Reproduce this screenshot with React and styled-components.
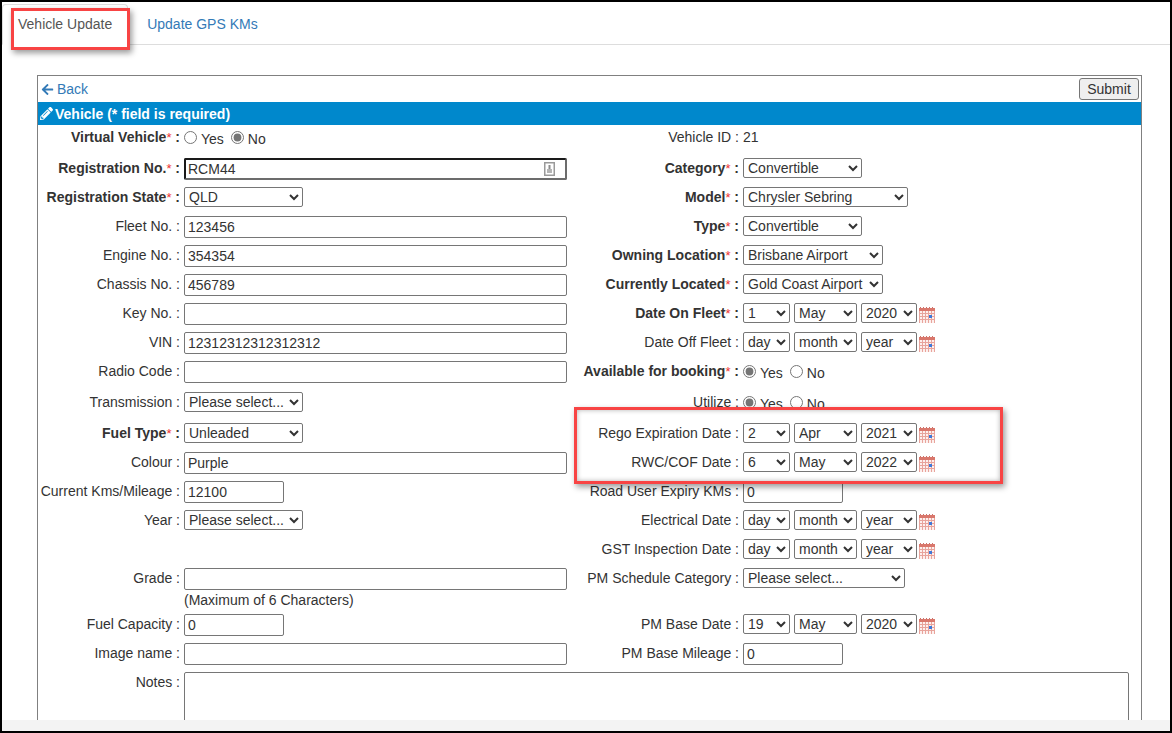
import React from 'react';
import styled, { createGlobalStyle } from 'styled-components';
import { FaArrowLeft, FaPencilAlt } from 'react-icons/fa';

const GlobalStyle = createGlobalStyle`
  html, body {
    margin: 0;
    padding: 0;
    overflow: hidden;
    background: #fff;
  }
  * {
    box-sizing: border-box;
  }
`;

const Frame = styled.div`
  position: relative;
  width: 1172px;
  height: 733px;
  border: 2px solid #000;
  background: #fff;
  display: flex;
  flex-direction: column;
  overflow: hidden;
  font-family: "Liberation Sans", Arial, sans-serif;
  font-size: 14px;
  line-height: 20px;
  color: #333;
`;

const Nav = styled.div`
  display: flex;
  flex: none;
  height: 43px;
  padding-top: 2px;
  border-bottom: 1px solid #ddd;
`;

const TabItem = styled.a`
  height: ${p => (p.$active ? '41px' : '40px')};
  padding: 9px 15px;
  margin-right: 3px;
  color: ${p => (p.$active ? '#555' : '#337ab7')};
  background: ${p => (p.$active ? '#fff' : 'transparent')};
  border: 1px solid ${p => (p.$active ? '#ddd' : 'transparent')};
  border-bottom-color: transparent;
  border-radius: 4px 4px 0 0;
  text-decoration: none;
`;

const Content = styled.div`
  flex: 1;
  min-height: 0;
  overflow: hidden;
  padding: 30px 0 0 35px;
`;

const Panel = styled.div`
  width: 1105px;
  border: 1px solid #808080;
  border-bottom: none;
`;

const PanelTop = styled.div`
  display: flex;
  align-items: center;
  justify-content: space-between;
  height: 26px;
  padding: 0 2px 0 3px;
`;

const BackLink = styled.a`
  display: flex;
  align-items: center;
  gap: 3px;
  color: #337ab7;
  text-decoration: none;
  svg {
    width: 13px;
    height: 13px;
  }
`;

const SubmitButton = styled.button`
  width: 60px;
  height: 22px;
  padding: 0;
  font: inherit;
  color: #333;
  background: #efefef;
  border: 1px solid #767676;
  border-radius: 3px;
`;

const TitleBar = styled.div`
  display: flex;
  align-items: center;
  gap: 2px;
  height: 23px;
  padding: 0 0 0 2px;
  background: #0088cc;
  color: #fff;
  font-weight: bold;
  svg {
    width: 13px;
    height: 13px;
  }
`;

const Form = styled.div`
  padding-top: 2px;
`;

const Row = styled.div`
  display: grid;
  grid-template-columns: 142px 383px 168px 1fr;
  column-gap: 4px;
  align-items: start;
  height: ${p => p.$h}px;
`;

const Label = styled.div`
  text-align: right;
  white-space: nowrap;
  font-weight: ${p => (p.$bold ? 'bold' : 'normal')};
`;

const Star = styled.span`
  color: #e33;
  font-weight: normal;
  font-size: 13px;
`;

const Control = styled.div`
  display: flex;
  align-items: center;
  min-height: 20px;
`;

const WideControl = styled(Control)`
  grid-column: 2 / -1;
`;

const TextInput = styled.input`
  width: ${p => p.$w || '100%'};
  height: 22px;
  padding: 1px 3px;
  font: inherit;
  color: #333;
  background: #fff;
  border: 1px solid #767676;
  border-radius: 2px;
  outline: none;
`;

const FocusWrap = styled.div`
  position: relative;
  width: 100%;
`;

const FocusInput = styled(TextInput)`
  padding: 1px 2px;
  border-width: 2px;
  border-color: #1a1a1a #6c6c6c #6c6c6c #1a1a1a;
`;

const ManagerIcon = styled.svg`
  position: absolute;
  top: 4px;
  right: 12px;
  width: 11px;
  height: 14px;
`;

const Select = styled.select`
  width: ${p => p.$w}px;
  height: 20px;
  font-family: inherit;
  font-size: 14px;
  color: #333;
  background: #fff;
  border: 1px solid #767676;
  border-radius: 2px;
`;

const DateGroup = styled.div`
  display: flex;
  align-items: center;
  gap: 4px;
`;

const CalendarSvg = styled.svg`
  width: 16px;
  height: 16px;
  margin: 3px 0 0 -2px;
`;

const RadioGroup = styled.div`
  display: flex;
  align-items: center;
  gap: 7px;
`;

const RadioLabel = styled.label`
  display: flex;
  align-items: center;
  gap: 4px;
  height: 20px;
`;

const RadioText = styled.span`
  padding-top: 3px;
`;

const Radio = styled.input`
  width: 13px;
  height: 13px;
  margin: 0;
  accent-color: #757575;
`;

const Plain = styled.span`
  white-space: nowrap;
`;

const Notes = styled.textarea`
  width: 945px;
  height: 120px;
  padding: 2px 3px;
  font: inherit;
  border: 1px solid #767676;
  border-radius: 2px;
  resize: none;
`;

const ScrollTrack = styled.div`
  flex: none;
  height: 11px;
  background: #f3f3f3;
`;

const TabMark = styled.div`
  position: absolute;
  left: 9px;
  top: 6px;
  width: 119px;
  height: 42px;
  border: 3px solid #f84444;
  box-shadow: 2px 3px 6px rgba(0, 0, 0, 0.4);
  pointer-events: none;
`;

const Callout = styled.div`
  position: absolute;
  left: 572px;
  top: 405px;
  width: 429px;
  height: 77px;
  padding-top: 13px;
  background: #fff;
  border: 3px solid #f84444;
  box-shadow: 2px 3px 6px rgba(0, 0, 0, 0.4), inset 0 0 5px rgba(0, 0, 0, 0.3);
`;

const CalloutRow = styled.div`
  display: grid;
  grid-template-columns: 162px 1fr;
  column-gap: 4px;
  align-items: start;
  height: 29px;
`;

const Field = ({ label, bold, req, children }) => (
  <>
    <Label $bold={bold}>
      {label}
      {req && <Star>*</Star>} :
    </Label>
    <Control>{children}</Control>
  </>
);

const Blank = () => (
  <>
    <div />
    <div />
  </>
);

const Sel = ({ w, value }) => (
  <Select $w={w} defaultValue={value}>
    <option>{value}</option>
  </Select>
);

const CalendarIcon = () => (
  <CalendarSvg viewBox="0 0 16 16">
    <rect x="0" y="1" width="16" height="15" fill="#fdf0ee" />
    <rect x="0" y="1" width="16" height="3" fill="#d9776c" />
    <path d="M1 .5h1M4 .5h1M7 .5h1M10 .5h1M13 .5h1" stroke="#c9726a" fill="none" />
    <path
      d="M0 6.5h16M0 9.5h16M0 12.5h16M.5 4v12M3.5 4v12M6.5 4v12M9.5 4v12M12.5 4v12M15.5 4v12"
      stroke="#e8a49c"
      fill="none"
    />
    <rect x="10" y="8" width="3" height="3" fill="#3f78d8" />
  </CalendarSvg>
);

const DateFields = ({ d, m, y }) => (
  <DateGroup>
    <Sel w={47} value={d} />
    <Sel w={63} value={m} />
    <Sel w={56} value={y} />
    <CalendarIcon />
  </DateGroup>
);

const YesNo = ({ name, yes }) => (
  <RadioGroup>
    <RadioLabel>
      <Radio type="radio" name={name} defaultChecked={yes} />
      <RadioText>Yes</RadioText>
    </RadioLabel>
    <RadioLabel>
      <Radio type="radio" name={name} defaultChecked={!yes} />
      <RadioText>No</RadioText>
    </RadioLabel>
  </RadioGroup>
);

export default function App() {
  return (
    <Frame>
      <GlobalStyle />
      <Nav>
        <TabItem $active>Vehicle Update</TabItem>
        <TabItem>Update GPS KMs</TabItem>
      </Nav>

      <Content>
        <Panel>
          <PanelTop>
            <BackLink>
              <FaArrowLeft />
              Back
            </BackLink>
            <SubmitButton>Submit</SubmitButton>
          </PanelTop>
          <TitleBar>
            <FaPencilAlt />
            Vehicle (* field is required)
          </TitleBar>

          <Form>
            <Row $h={31}>
              <Field label="Virtual Vehicle" bold req>
                <YesNo name="virtual" yes={false} />
              </Field>
              <Field label="Vehicle ID">
                <Plain>21</Plain>
              </Field>
            </Row>
            <Row $h={29}>
              <Field label="Registration No." bold req>
                <FocusWrap>
                  <FocusInput defaultValue="RCM44" />
                  <ManagerIcon viewBox="0 0 11 14">
                    <rect x="0.75" y="0.75" width="9.5" height="12.5" fill="#fff" stroke="#9a9a9a" strokeWidth="1.5" />
                    <rect x="4.5" y="3" width="2" height="4" fill="#8c8c8c" />
                    <rect x="3" y="7" width="5" height="4" fill="#b5b5b5" />
                  </ManagerIcon>
                </FocusWrap>
              </Field>
              <Field label="Category" bold req>
                <Sel w={119} value="Convertible" />
              </Field>
            </Row>
            <Row $h={29}>
              <Field label="Registration State" bold req>
                <Sel w={119} value="QLD" />
              </Field>
              <Field label="Model" bold req>
                <Sel w={165} value="Chrysler Sebring" />
              </Field>
            </Row>
            <Row $h={29}>
              <Field label="Fleet No.">
                <TextInput defaultValue="123456" />
              </Field>
              <Field label="Type" bold req>
                <Sel w={119} value="Convertible" />
              </Field>
            </Row>
            <Row $h={29}>
              <Field label="Engine No.">
                <TextInput defaultValue="354354" />
              </Field>
              <Field label="Owning Location" bold req>
                <Sel w={140} value="Brisbane Airport" />
              </Field>
            </Row>
            <Row $h={29}>
              <Field label="Chassis No.">
                <TextInput defaultValue="456789" />
              </Field>
              <Field label="Currently Located" bold req>
                <Sel w={140} value="Gold Coast Airport" />
              </Field>
            </Row>
            <Row $h={29}>
              <Field label="Key No.">
                <TextInput />
              </Field>
              <Field label="Date On Fleet" bold req>
                <DateFields d="1" m="May" y="2020" />
              </Field>
            </Row>
            <Row $h={29}>
              <Field label="VIN">
                <TextInput defaultValue="12312312312312312" />
              </Field>
              <Field label="Date Off Fleet">
                <DateFields d="day" m="month" y="year" />
              </Field>
            </Row>
            <Row $h={31}>
              <Field label="Radio Code">
                <TextInput />
              </Field>
              <Field label="Available for booking" bold req>
                <YesNo name="available" yes />
              </Field>
            </Row>
            <Row $h={31}>
              <Field label="Transmission">
                <Sel w={119} value="Please select..." />
              </Field>
              <Field label="Utilize">
                <YesNo name="utilize" yes />
              </Field>
            </Row>
            <Row $h={29}>
              <Field label="Fuel Type" bold req>
                <Sel w={119} value="Unleaded" />
              </Field>
              <Blank />
            </Row>
            <Row $h={29}>
              <Field label="Colour">
                <TextInput defaultValue="Purple" />
              </Field>
              <Blank />
            </Row>
            <Row $h={29}>
              <Field label="Current Kms/Mileage">
                <TextInput $w="100px" defaultValue="12100" />
              </Field>
              <Field label="Road User Expiry KMs">
                <TextInput $w="100px" defaultValue="0" />
              </Field>
            </Row>
            <Row $h={29}>
              <Field label="Year">
                <Sel w={119} value="Please select..." />
              </Field>
              <Field label="Electrical Date">
                <DateFields d="day" m="month" y="year" />
              </Field>
            </Row>
            <Row $h={29}>
              <Blank />
              <Field label="GST Inspection Date">
                <DateFields d="day" m="month" y="year" />
              </Field>
            </Row>
            <Row $h={22}>
              <Field label="Grade">
                <TextInput />
              </Field>
              <Field label="PM Schedule Category">
                <Sel w={162} value="Please select..." />
              </Field>
            </Row>
            <Row $h={24}>
              <div />
              <Plain>(Maximum of 6 Characters)</Plain>
            </Row>
            <Row $h={29}>
              <Field label="Fuel Capacity">
                <TextInput $w="100px" defaultValue="0" />
              </Field>
              <Field label="PM Base Date">
                <DateFields d="19" m="May" y="2020" />
              </Field>
            </Row>
            <Row $h={29}>
              <Field label="Image name">
                <TextInput />
              </Field>
              <Field label="PM Base Mileage">
                <TextInput $w="100px" defaultValue="0" />
              </Field>
            </Row>
            <Row $h={120}>
              <Label>Notes :</Label>
              <WideControl>
                <Notes />
              </WideControl>
            </Row>
          </Form>
        </Panel>
      </Content>

      <ScrollTrack />

      <TabMark />
      <Callout>
        <CalloutRow>
          <Label>Rego Expiration Date :</Label>
          <DateFields d="2" m="Apr" y="2021" />
        </CalloutRow>
        <CalloutRow>
          <Label>RWC/COF Date :</Label>
          <DateFields d="6" m="May" y="2022" />
        </CalloutRow>
      </Callout>
    </Frame>
  );
}
